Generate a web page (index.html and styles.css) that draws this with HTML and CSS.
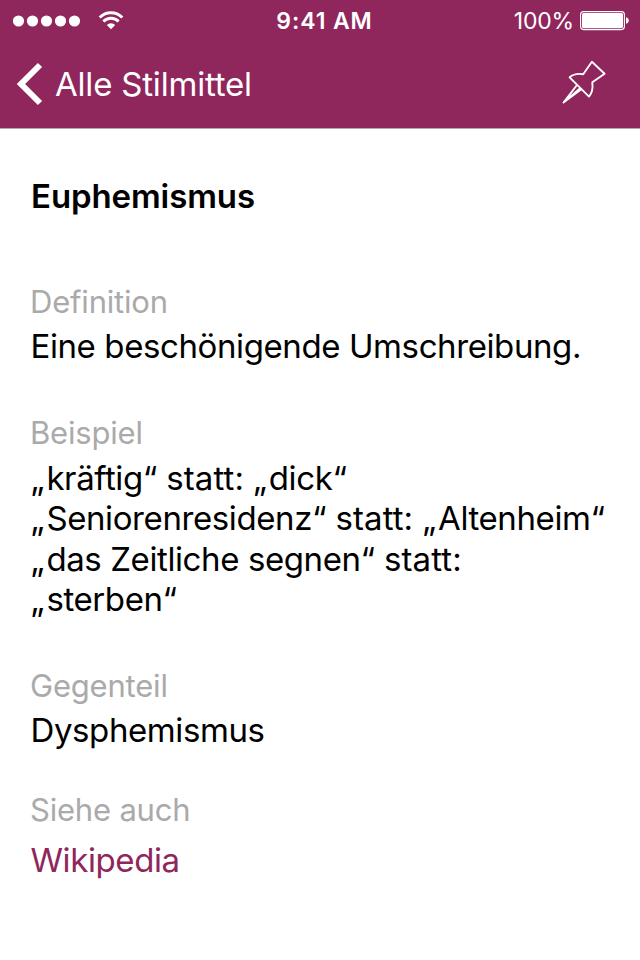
FILE: index.html
```html
<!DOCTYPE html>
<html lang="de">
<head>
<meta charset="utf-8">
<title>Euphemismus</title>
<link rel="stylesheet" href="styles.css">
</head>
<body>
<header class="header">
  <div class="status">
    <div class="signal">
      <svg class="dots" width="68" height="12" viewBox="0 0 68 12" fill="#fff"><circle cx="5.5" cy="6" r="5.6"/><circle cx="19.5" cy="6" r="5.6"/><circle cx="33.5" cy="6" r="5.6"/><circle cx="47.5" cy="6" r="5.6"/><circle cx="61.5" cy="6" r="5.6"/></svg>
      <svg class="wifi" width="26" height="20" viewBox="0 0 26 20" fill="none" stroke="#fff" stroke-width="2.9"><path d="M1.7 7.4a15.9 15.9 0 0 1 22.6 0M5.4 11.4a10.7 10.7 0 0 1 15.2 0"/><path d="M8.8 14.9a6 6 0 0 1 8.4 0L13 19.2z" fill="#fff" stroke="none"/></svg>
    </div>
    <span class="time">9:41 AM</span>
    <div class="power">
      <span class="percent">100%</span>
      <svg width="50" height="20" viewBox="0 0 50 20"><rect x=".6" y=".6" width="43.8" height="18" rx="3" fill="none" stroke="#fff" stroke-width="1.1"/><rect x="2" y="2" width="41" height="15.2" rx="1.6" fill="#fff"/><path d="M46 6.2c3.7.8 3.7 5.8 0 6.6z" fill="#fff"/></svg>
    </div>
  </div>
  <nav class="nav">
    <a class="back">
      <svg width="27" height="44" viewBox="0 0 27 44" fill="none" stroke="#fff" stroke-width="6"><path d="M24 3 5 22 24 41"/></svg>
      <span class="back-label">Alle Stilmittel</span>
    </a>
    <svg class="pin" width="46" height="46" viewBox="0 0 46 46" fill="none" stroke="#fff" stroke-width="1.9" stroke-linejoin="round"><path d="M31.9 1.8 44.6 13.7 32.3 22.3C33 28 32.3 33 29 36.6L9.6 17.3C13 14.3 17.5 13.2 23.2 14.2ZM17 25 3.5 42.6 21.3 29.2M20.1 28.2 3.5 42.6"/></svg>
  </nav>
</header>
<main class="content">
  <h1 class="title">Euphemismus</h1>
  <section class="entry">
    <h2 class="label">Definition</h2>
    <p class="text">Eine beschönigende Umschreibung.</p>
  </section>
  <section class="entry">
    <h2 class="label">Beispiel</h2>
    <p class="text quotes"><span class="open">„</span>kräftig<span class="close">“</span> <span class="versus">statt:</span> <span class="open">„</span>dick<span class="close">“</span><br><span class="open">„</span>Seniorenresidenz<span class="close">“</span> <span class="versus">statt:</span> <span class="open">„</span>Altenheim<span class="close">“</span><br><span class="open">„</span>das Zeitliche segnen<span class="close">“</span> <span class="versus">statt:</span><br><span class="open">„</span>sterben<span class="close">“</span></p>
  </section>
  <section class="entry opposite">
    <h2 class="label">Gegenteil</h2>
    <p class="text">Dysphemismus</p>
  </section>
  <section class="entry related">
    <h2 class="label">Siehe auch</h2>
    <a class="text link">Wikipedia</a>
  </section>
</main>
</body>
</html>
```

FILE: styles.css
```css
* { box-sizing: border-box; margin: 0; }
body { width: 640px; height: 960px; overflow: hidden; background: #fff; color: #000; font-family: Inter, sans-serif; }
svg { display: block; flex: none; }
.header { height: 129px; background: #8f265c; color: #fff; border-bottom: 1px solid #b0a8ab; }
.status { height: 40px; display: grid; grid-template-columns: 1fr auto 1fr; align-items: center; padding: 0 10px 0 13px; }
.signal { display: flex; align-items: center; gap: 17px; }
.wifi { margin-top: -2px; }
.time { font-size: 23px; font-weight: 600; line-height: 40px; letter-spacing: 0.9px; padding: 1px 0 0 6px; }
.power { display: flex; align-items: center; justify-content: flex-end; gap: 6px; padding-top: 1px; }
.percent { font-size: 23px; font-weight: 400; line-height: 40px; letter-spacing: -0.2px; }
.nav { height: 88px; display: flex; align-items: center; justify-content: space-between; padding: 0 34px 0 16px; }
.pin { margin-top: -2px; }
.back { display: flex; align-items: center; gap: 12px; }
.back-label { font-size: 33px; line-height: 40px; font-weight: 400; letter-spacing: -0.2px; }
.content { padding: 47px 30px 0; }
.title { font-size: 33px; line-height: 40px; font-weight: 600; letter-spacing: -0.1px; margin: 0 0 66px 1px; }
.entry { margin-bottom: 47px; }
.label { font-size: 31px; line-height: 40px; font-weight: 400; letter-spacing: -0.2px; color: #aaa; margin: 0 0 4px; }
.text { display: block; font-size: 33px; line-height: 40px; font-weight: 400; letter-spacing: -0.4px; white-space: nowrap; margin-left: 0.5px; }
.quotes { line-height: 40.4px; padding-top: 1px; margin-bottom: -1px; }
.open { letter-spacing: 2px; }
.close { letter-spacing: 0; }
.versus { letter-spacing: 0.1px; }
.opposite { margin-bottom: 40px; }
.related .label { margin-bottom: 10px; }
.link { color: #8f265c; }
```
